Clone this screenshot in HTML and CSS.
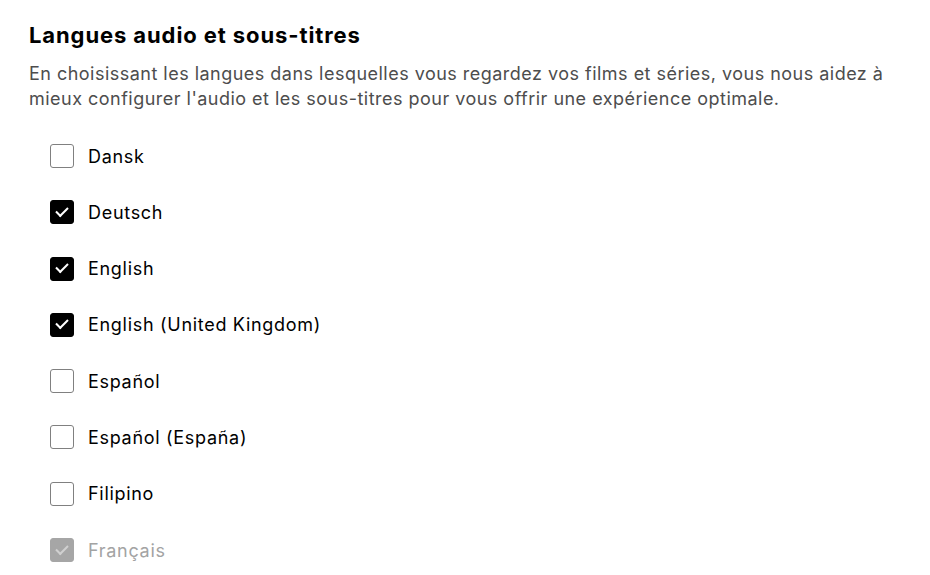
FILE: index.html
```html
<!DOCTYPE html>
<html lang="fr">
<head>
  <meta charset="UTF-8">
  <meta name="viewport" content="width=device-width, initial-scale=1.0">
  <title>Langues audio et sous-titres</title>
  <link rel="stylesheet" href="styles.css">
</head>
<body>

  <div class="container">
    <h1>Langues audio et sous-titres</h1>
    <p class="intro">En choisissant les langues dans lesquelles vous regardez vos films et séries, vous nous aidez à mieux configurer l'audio et les sous-titres pour vous offrir une expérience optimale.</p>

    <ul class="langs">
      <li><label class="opt"><input type="checkbox"><span class="box"></span>Dansk</label></li>
      <li><label class="opt"><input type="checkbox" checked><span class="box"></span>Deutsch</label></li>
      <li><label class="opt"><input type="checkbox" checked><span class="box"></span>English</label></li>
      <li><label class="opt"><input type="checkbox" checked><span class="box"></span>English (United Kingdom)</label></li>
      <li><label class="opt"><input type="checkbox"><span class="box"></span>Español</label></li>
      <li><label class="opt"><input type="checkbox"><span class="box"></span>Español (España)</label></li>
      <li><label class="opt"><input type="checkbox"><span class="box"></span>Filipino</label></li>
      <li><label class="opt disabled"><input type="checkbox" checked disabled><span class="box"></span>Français</label></li>
    </ul>
  </div>

</body>
</html>
```

FILE: styles.css
```css
* {
  box-sizing: border-box;
}

body {
  font-family: Inter, "Noto Sans", sans-serif;
  background-color: #fff;
  color: #000;
  margin: 0;
  padding: 21px 29px;
}

.container {
  max-width: 870px;
}

h1 {
  margin: 0;
  font-size: 22px;
  font-weight: 700;
  line-height: 28px;
  letter-spacing: 0.9px;
}

.intro {
  margin: 12px 0 0;
  font-size: 18px;
  line-height: 25px;
  color: #4d4d4d;
  letter-spacing: 0.48px;
}

.langs {
  list-style: none;
  margin: 33px 0 0 21px;
  padding: 0;
  display: flex;
  flex-direction: column;
  gap: 32.3px;
}

.opt {
  display: flex;
  align-items: center;
  gap: 14px;
  height: 24px;
  font-size: 18px;
  letter-spacing: 0.7px;
  cursor: pointer;
}

.opt input {
  display: none;
}

.box {
  width: 24px;
  height: 24px;
  border: 1px solid #808080;
  border-radius: 3px;
  background: #fff;
  display: flex;
  align-items: center;
  justify-content: center;
  flex-shrink: 0;
}

/* tick drawn with two borders of a rotated box */
input:checked + .box {
  background: #000;
  border-color: #000;
}

input:checked + .box::after {
  content: "";
  width: 10px;
  height: 5px;
  border-left: 2px solid #fff;
  border-bottom: 2px solid #fff;
  transform: translateY(-2px) rotate(-45deg);
}

.disabled {
  color: #a3a3a3;
  cursor: default;
}

.disabled input:checked + .box {
  background: #a6a6a6;
  border-color: #a6a6a6;
}

.disabled input:checked + .box::after {
  border-color: #d0d0d0;
}
```
